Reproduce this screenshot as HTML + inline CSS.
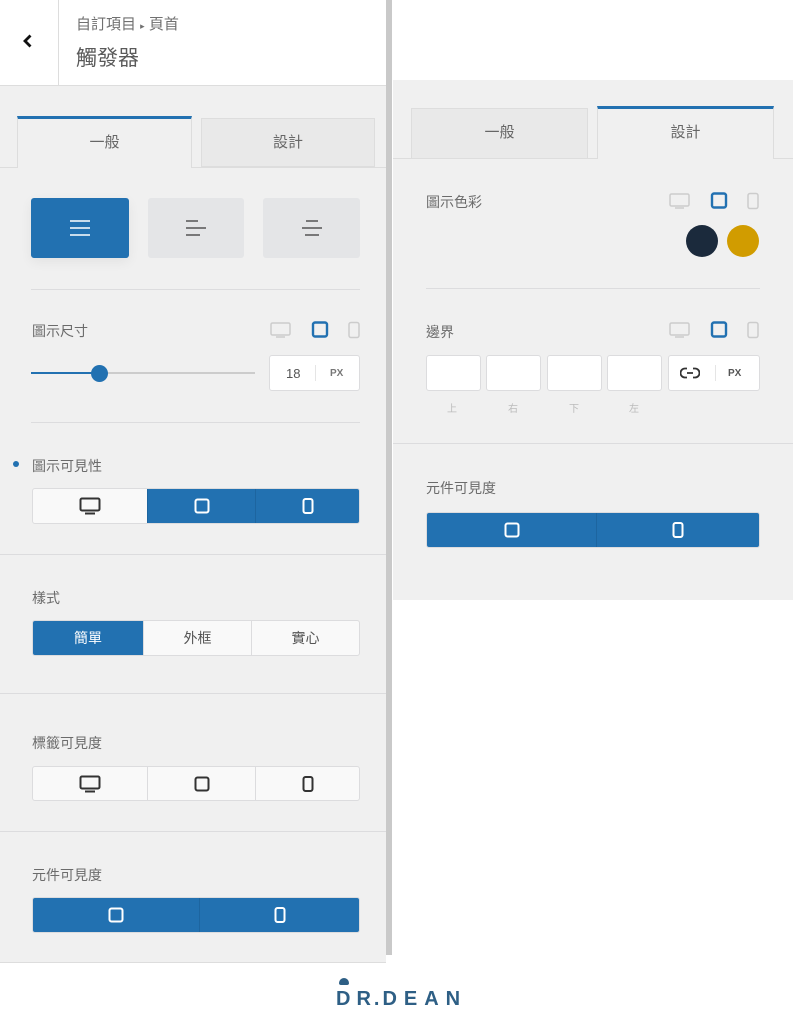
<!DOCTYPE html>
<html><head><meta charset="utf-8"><style>
*{box-sizing:border-box;margin:0;padding:0}
body{width:793px;height:1024px;background:#fff;position:relative;overflow:hidden;font-family:"Liberation Sans","Noto Sans CJK TC",sans-serif;color:#50575e}
.a{position:absolute}
.lbl{position:absolute;font-size:14px;color:#6b6b6b;line-height:16px}
.hr{position:absolute;height:1px;background:#dcdcde}
.seg{position:absolute;display:flex;border:1px solid #dcdcde;border-radius:3px;overflow:hidden;background:#f9f9f9}
.seg div{display:flex;align-items:center;justify-content:center;border-left:1px solid #dcdcde;font-size:14px;color:#555}
.seg div:first-child{border-left:none}
.seg .on{background:#2271b1;color:#fff;border-color:#1d65a0}
.box{position:absolute;background:#fff;border:1px solid #dcdcde;border-radius:3px}
svg{display:block}
</style></head><body>
<div class="a" style="left:0;top:0;width:386px;height:963px;background:#f0f0f0;border-bottom:1px solid #ddd"></div>
<div class="a" style="left:386px;top:0;width:6px;height:955px;background:#c9c9c9"></div>
<div class="a" style="left:0;top:0;width:386px;height:86px;background:#fff;border-bottom:1px solid #ddd"></div>
<div class="a" style="left:58px;top:0;width:1px;height:86px;background:#ddd"></div>
<svg class="a" style="left:21px;top:33px" width="14" height="16"><path d="M9.5 2.5 L4 8 L9.5 13.5" stroke="#111" stroke-width="2.8" fill="none"/></svg>
<div class="a" style="left:76px;top:13px;font-size:15px;color:#707070">自訂項目 <span style="font-size:9px">▸</span> 頁首</div>
<div class="a" style="left:76px;top:42px;font-size:21px;color:#5a5a5a">觸發器</div>
<div class="a" style="left:0;top:167px;width:386px;height:1px;background:#ddd"></div>
<div class="a" style="left:17px;top:116px;width:175px;height:52px;background:#f0f0f0;border:1px solid #ddd;border-bottom:none;border-top:3px solid #2271b1;text-align:center;line-height:48px;font-size:15px;color:#666">一般</div>
<div class="a" style="left:201px;top:118px;width:174px;height:49px;background:#e9e9e9;border:1px solid #ddd;text-align:center;line-height:47px;font-size:15px;color:#666">設計</div>
<div class="a" style="left:31px;top:198px;width:98px;height:60px;background:#2271b1;border-radius:3px;box-shadow:0 4px 12px rgba(0,0,0,.06)"></div>
<svg class="a" style="left:69px;top:219px" width="22" height="18"><path d="M1 2H21M1 9H21M1 16H21" stroke="#fff" stroke-width="1.6"/></svg>
<div class="a" style="left:148px;top:198px;width:96px;height:60px;background:#e4e5e7;border-radius:3px"></div>
<svg class="a" style="left:185px;top:219px" width="22" height="18"><path d="M1 2H13M1 9H21M1 16H15" stroke="#555" stroke-width="1.6"/></svg>
<div class="a" style="left:263px;top:198px;width:97px;height:60px;background:#e4e5e7;border-radius:3px"></div>
<svg class="a" style="left:301px;top:219px" width="22" height="18"><path d="M5 2H17M1 9H21M4 16H18" stroke="#555" stroke-width="1.6"/></svg>
<div class="hr" style="left:31px;top:289px;width:329px"></div>
<div class="lbl" style="left:32px;top:323px">圖示尺寸</div>
<svg class="a" style="left:270px;top:321px" width="92" height="18"><rect x="1" y="2" width="19" height="12" rx="1.5" fill="none" stroke="#ccc" stroke-width="1.5"/><path d="M6 16H15" stroke="#ccc" stroke-width="1.5"/><rect x="43" y="1.5" width="14" height="14" rx="2" fill="none" stroke="#2271b1" stroke-width="2.4"/><rect x="79" y="1.5" width="10" height="15" rx="2" fill="none" stroke="#ccc" stroke-width="1.5"/></svg>
<div class="a" style="left:31px;top:372px;width:224px;height:2px;background:#ccc"></div>
<div class="a" style="left:31px;top:372px;width:68px;height:2px;background:#2271b1"></div>
<div class="a" style="left:91px;top:365px;width:17px;height:17px;border-radius:50%;background:#2271b1"></div>
<div class="box" style="left:269px;top:355px;width:91px;height:36px"></div>
<div class="a" style="left:286px;top:366px;font-size:13px;color:#555">18</div>
<div class="a" style="left:315px;top:365px;width:1px;height:16px;background:#e5e5e5"></div>
<div class="a" style="left:330px;top:368px;font-size:10px;font-weight:bold;color:#777">PX</div>
<div class="hr" style="left:31px;top:422px;width:329px"></div>
<div class="a" style="left:13px;top:461px;width:6px;height:6px;border-radius:50%;background:#2271b1"></div>
<div class="lbl" style="left:32px;top:458px">圖示可見性</div>
<div class="seg" style="left:32px;top:488px;width:328px;height:36px"><div style="width:114px"><svg width="22" height="18"><rect x="1.5" y="1.5" width="19" height="12" rx="1.5" fill="none" stroke="#333" stroke-width="2"/><path d="M6 16.5H16" stroke="#333" stroke-width="2"/></svg></div><div class="on" style="width:108px"><svg width="16" height="16"><rect x="1.5" y="1.5" width="13" height="13" rx="2" fill="none" stroke="#fff" stroke-width="2"/></svg></div><div class="on" style="flex:1"><svg width="12" height="16"><rect x="1.5" y="1" width="9" height="14" rx="2" fill="none" stroke="#fff" stroke-width="2"/></svg></div></div>
<div class="hr" style="left:0;top:554px;width:386px"></div>
<div class="lbl" style="left:32px;top:590px">樣式</div>
<div class="seg" style="left:32px;top:620px;width:328px;height:36px"><div class="on" style="width:110px">簡單</div><div style="width:108px">外框</div><div style="flex:1">實心</div></div>
<div class="hr" style="left:0;top:693px;width:386px"></div>
<div class="lbl" style="left:32px;top:735px">標籤可見度</div>
<div class="seg" style="left:32px;top:766px;width:328px;height:35px"><div style="width:114px"><svg width="22" height="18"><rect x="1.5" y="1.5" width="19" height="12" rx="1.5" fill="none" stroke="#333" stroke-width="2"/><path d="M6 16.5H16" stroke="#333" stroke-width="2"/></svg></div><div style="width:108px"><svg width="16" height="16"><rect x="1.5" y="1.5" width="13" height="13" rx="2" fill="none" stroke="#333" stroke-width="2"/></svg></div><div style="flex:1"><svg width="12" height="16"><rect x="1.5" y="1" width="9" height="14" rx="2" fill="none" stroke="#333" stroke-width="2"/></svg></div></div>
<div class="hr" style="left:0;top:831px;width:386px"></div>
<div class="lbl" style="left:32px;top:867px">元件可見度</div>
<div class="seg" style="left:32px;top:897px;width:328px;height:36px"><div class="on" style="width:166px"><svg width="16" height="16"><rect x="1.5" y="1.5" width="13" height="13" rx="2" fill="none" stroke="#fff" stroke-width="2"/></svg></div><div class="on" style="flex:1"><svg width="12" height="16"><rect x="1.5" y="1" width="9" height="14" rx="2" fill="none" stroke="#fff" stroke-width="2"/></svg></div></div>

<div class="a" style="left:393px;top:80px;width:400px;height:520px;background:#f0f0f0"></div>
<div class="a" style="left:393px;top:158px;width:400px;height:1px;background:#ddd"></div>
<div class="a" style="left:411px;top:108px;width:177px;height:51px;background:#e9e9e9;border:1px solid #ddd;text-align:center;line-height:48px;font-size:15px;color:#666">一般</div>
<div class="a" style="left:597px;top:106px;width:177px;height:53px;background:#f0f0f0;border:1px solid #ddd;border-bottom:none;border-top:3px solid #2271b1;text-align:center;line-height:48px;font-size:15px;color:#666">設計</div>
<div class="lbl" style="left:426px;top:194px">圖示色彩</div>
<svg class="a" style="left:669px;top:192px" width="92" height="18"><rect x="1" y="2" width="19" height="12" rx="1.5" fill="none" stroke="#ccc" stroke-width="1.5"/><path d="M6 16H15" stroke="#ccc" stroke-width="1.5"/><rect x="43" y="1.5" width="14" height="14" rx="2" fill="none" stroke="#2271b1" stroke-width="2.4"/><rect x="79" y="1.5" width="10" height="15" rx="2" fill="none" stroke="#ccc" stroke-width="1.5"/></svg>
<div class="a" style="left:686px;top:225px;width:32px;height:32px;border-radius:50%;background:#1b2a3c"></div>
<div class="a" style="left:727px;top:225px;width:32px;height:32px;border-radius:50%;background:#d19c00"></div>
<div class="hr" style="left:426px;top:288px;width:334px"></div>
<div class="lbl" style="left:426px;top:324px">邊界</div>
<svg class="a" style="left:669px;top:321px" width="92" height="18"><rect x="1" y="2" width="19" height="12" rx="1.5" fill="none" stroke="#ccc" stroke-width="1.5"/><path d="M6 16H15" stroke="#ccc" stroke-width="1.5"/><rect x="43" y="1.5" width="14" height="14" rx="2" fill="none" stroke="#2271b1" stroke-width="2.4"/><rect x="79" y="1.5" width="10" height="15" rx="2" fill="none" stroke="#ccc" stroke-width="1.5"/></svg>
<div class="box" style="left:426px;top:355px;width:55px;height:36px"></div>
<div class="box" style="left:486px;top:355px;width:55px;height:36px"></div>
<div class="box" style="left:547px;top:355px;width:55px;height:36px"></div>
<div class="box" style="left:607px;top:355px;width:55px;height:36px"></div>
<div class="box" style="left:668px;top:355px;width:92px;height:36px"></div>
<svg class="a" style="left:680px;top:366px" width="20" height="14"><path d="M7 2.5H5a4.5 4.5 0 0 0 0 9h2M13 2.5h2a4.5 4.5 0 0 1 0 9h-2M7 7h6" stroke="#333" stroke-width="1.8" fill="none"/></svg>
<div class="a" style="left:715px;top:365px;width:1px;height:16px;background:#e5e5e5"></div>
<div class="a" style="left:728px;top:368px;font-size:10px;font-weight:bold;color:#555">PX</div>
<div class="a" style="left:447px;top:400px;font-size:10px;color:#bbb">上</div>
<div class="a" style="left:508px;top:400px;font-size:10px;color:#bbb">右</div>
<div class="a" style="left:569px;top:400px;font-size:10px;color:#bbb">下</div>
<div class="a" style="left:629px;top:400px;font-size:10px;color:#bbb">左</div>
<div class="hr" style="left:393px;top:443px;width:400px"></div>
<div class="lbl" style="left:426px;top:480px">元件可見度</div>
<div class="seg" style="left:426px;top:512px;width:334px;height:36px"><div class="on" style="width:169px"><svg width="16" height="16"><rect x="1.5" y="1.5" width="13" height="13" rx="2" fill="none" stroke="#fff" stroke-width="2"/></svg></div><div class="on" style="flex:1"><svg width="12" height="16"><rect x="1.5" y="1" width="9" height="14" rx="2" fill="none" stroke="#fff" stroke-width="2"/></svg></div></div>

<div class="a" style="left:339px;top:978px;width:10px;height:7px;border-radius:5px 5px 2px 2px;background:#2e5f85"></div>
<div class="a" style="left:336px;top:988px;font-size:20px;font-weight:bold;color:#2e5f85;letter-spacing:6px;line-height:22px;white-space:nowrap">D<span style="font-weight:600;letter-spacing:3px">R.</span><span style="font-weight:600;letter-spacing:7px">DEAN</span></div>
</body></html>
